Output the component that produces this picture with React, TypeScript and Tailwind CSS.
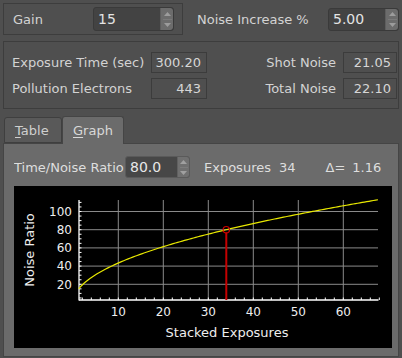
import React from "react";

function SpinButtons({ h }: { h: number }) {
  return (
    <div className="w-[13px] self-stretch bg-[#6c6c6c] border-l border-[#5e5e5e] rounded-r-[3px] flex flex-col items-center justify-center gap-[3px]">
      <svg width="7" height="4" viewBox="0 0 7 4">
        <polygon points="0,4 3.5,0 7,4" fill="#9c9c9c" />
      </svg>
      <div className="w-[9px] h-px bg-[#7a7a7a]" />
      <svg width="7" height="4" viewBox="0 0 7 4">
        <polygon points="0,0 3.5,4 7,0" fill="#9c9c9c" />
      </svg>
    </div>
  );
}

function SpinBox({ value, w, h }: { value: string; w: string; h: string }) {
  return (
    <div className={`${w} ${h} flex border border-[#3a3a3a] rounded-[3px] bg-[#434343] overflow-hidden`}>
      <div className="flex-1 flex items-center pl-[4px] text-[14px] text-[#e4e4e4]">{value}</div>
      <SpinButtons h={0} />
    </div>
  );
}

function Field({ value, w }: { value: string; w: string }) {
  return (
    <div className={`${w} h-[21px] border border-[#3c3c3c] flex items-center justify-end pr-[5px] text-[#d6d6d6]`}>
      {value}
    </div>
  );
}

function Chart() {
  const px = (x: number) => 73.3 + 4.5 * x;
  const py = (v: number) => 301.5 - 0.91 * v;
  const pts: string[] = [];
  for (let x = 1.2; x <= 67.8; x += 0.5) {
    pts.push(`${px(x).toFixed(2)},${py(13.72 * Math.sqrt(x)).toFixed(2)}`);
  }
  const xMajor = [10, 20, 30, 40, 50, 60];
  const yMajor = [20, 40, 60, 80, 100];
  const xMinor: number[] = [];
  for (let x = 2; x <= 68; x += 2) xMinor.push(x);
  const yMinor: number[] = [];
  for (let v = 5; v <= 110; v += 5) yMinor.push(v);
  const axisY = 299;
  const axisX = 79;
  return (
    <svg width="378" height="162" viewBox="14 185 378 162" className="block">
      <rect x="14" y="185" width="378" height="162" fill="#000" />
      {xMajor.map((x) => (
        <line key={"gx" + x} x1={px(x)} x2={px(x)} y1={199} y2={axisY} stroke="#8a8a8a" strokeWidth="1" />
      ))}
      {yMajor.map((v) => (
        <line key={"gy" + v} x1={axisX} x2={378} y1={py(v)} y2={py(v)} stroke="#8a8a8a" strokeWidth="1" />
      ))}
      {xMinor.map((x) => (
        <line key={"tx" + x} x1={px(x)} x2={px(x)} y1={axisY} y2={axisY - 2.5} stroke="#fff" strokeWidth="1" />
      ))}
      {yMinor.map((v) => (
        <line key={"ty" + v} x1={axisX} x2={axisX + 2.5} y1={py(v)} y2={py(v)} stroke="#fff" strokeWidth="1" />
      ))}
      <line x1={axisX} x2={axisX} y1={199} y2={axisY + 0.5} stroke="#fff" strokeWidth="1.3" />
      <line x1={axisX} x2={378.5} y1={axisY} y2={axisY} stroke="#fff" strokeWidth="1.3" />
      <polyline points={pts.join(" ")} fill="none" stroke="#e8e800" strokeWidth="1.2" />
      <line x1={px(34)} x2={px(34)} y1={py(80) + 3} y2={axisY} stroke="#c40000" strokeWidth="2" />
      <circle cx={px(34)} cy={py(80)} r="3.2" fill="none" stroke="#d00000" strokeWidth="1.2" />
      {xMajor.map((x) => (
        <text key={"lx" + x} x={px(x)} y={315} fill="#eeeeee" fontSize="12" textAnchor="middle" fontFamily="DejaVu Sans">
          {x}
        </text>
      ))}
      {yMajor.map((v) => (
        <text key={"ly" + v} x={72} y={py(v) + 4.3} fill="#eeeeee" fontSize="12" textAnchor="end" fontFamily="DejaVu Sans">
          {v}
        </text>
      ))}
      <text x={227} y={336} fill="#eeeeee" fontSize="13" textAnchor="middle" fontFamily="DejaVu Sans">
        Stacked Exposures
      </text>
      <text
        x={0}
        y={0}
        fill="#eeeeee"
        fontSize="13"
        textAnchor="middle"
        fontFamily="DejaVu Sans"
        transform="translate(34 249) rotate(-90)"
      >
        Noise Ratio
      </text>
    </svg>
  );
}

export default function App() {
  return (
    <div className="w-[402px] h-[358px] bg-[#4f4f4f] overflow-hidden font-['DejaVu_Sans',sans-serif] text-[13px] text-[#d3d3d3] leading-none">
      {/* Row 1 */}
      <div className="flex pt-[3px] pl-[3px] h-[35px]">
        <div className="w-[180px] h-[32px] border border-[#3d3d3d] flex items-center">
          <span className="pl-[9px] w-[89px]">Gain</span>
          <SpinBox value="15" w="w-[81px]" h="h-[24px]" />
        </div>
        <div className="flex items-center h-[32px] pl-[14px]">
          <span className="w-[131px]">Noise Increase %</span>
          <SpinBox value="5.00" w="w-[71px]" h="h-[23px]" />
        </div>
      </div>
      {/* Row 2 */}
      <div className="ml-[3px] mt-[6px] w-[396px] h-[68px] border border-[#3d3d3d] flex flex-col gap-[5px] pt-[10px]">
        <div className="flex items-center h-[21px]">
          <span className="pl-[8px] w-[147px]">Exposure Time (sec)</span>
          <Field value="300.20" w="w-[56px]" />
          <span className="flex-1 text-right pr-[7px]">Shot Noise</span>
          <Field value="21.05" w="w-[54px]" />
          <div className="w-[1px]" />
        </div>
        <div className="flex items-center h-[21px]">
          <span className="pl-[8px] w-[147px]">Pollution Electrons</span>
          <Field value="443" w="w-[56px]" />
          <span className="flex-1 text-right pr-[7px]">Total Noise</span>
          <Field value="22.10" w="w-[54px]" />
          <div className="w-[1px]" />
        </div>
      </div>
      {/* Tabs */}
      <div className="mt-[7px] ml-[4px] flex items-end h-[27px] relative z-10">
        <div className="w-[58px] h-[26px] bg-[#595959] border border-[#3f3f3f] rounded-t-[3px] flex items-center pl-[10px] text-[#cfcfcf]">
          <span>
            <span className="underline underline-offset-2">T</span>able
          </span>
        </div>
        <div className="w-[62px] h-[28px] bg-[#6b6b6b] border border-[#454545] border-b-0 rounded-t-[3px] flex items-center pl-[10px] text-[#d8d8d8] -mb-[1px]">
          <span>
            <span className="underline underline-offset-2">G</span>raph
          </span>
        </div>
      </div>
      {/* Panel */}
      <div className="ml-[3px] w-[396px] h-[214px] bg-[#6b6b6b] border border-[#454545] flex flex-col pt-[12px] pl-[10px]">
        <div className="flex items-center h-[22px] text-[#dedede]">
          <span className="w-[111px] whitespace-nowrap overflow-hidden">Time/Noise Ratio</span>
          <div className="w-[65px] h-[22px] flex border border-[#5a5a5a] rounded-[3px] bg-[#474747] overflow-hidden">
            <div className="flex-1 flex items-center pl-[4px] text-[14px] text-[#e8e8e8]">80.0</div>
            <div className="w-[12px] self-stretch bg-[#707070] border-l border-[#606060] flex flex-col items-center justify-center gap-[3px]">
              <svg width="7" height="4" viewBox="0 0 7 4">
                <polygon points="0,4 3.5,0 7,4" fill="#a0a0a0" />
              </svg>
              <div className="w-[8px] h-px bg-[#7c7c7c]" />
              <svg width="7" height="4" viewBox="0 0 7 4">
                <polygon points="0,0 3.5,4 7,0" fill="#a0a0a0" />
              </svg>
            </div>
          </div>
          <span className="ml-[14px]">Exposures</span>
          <span className="ml-[8px]">34</span>
          <span className="ml-[30px]">Δ=</span>
          <span className="ml-[7px]">1.16</span>
        </div>
        <div className="mt-[8px]">
          <Chart />
        </div>
      </div>
    </div>
  );
}
